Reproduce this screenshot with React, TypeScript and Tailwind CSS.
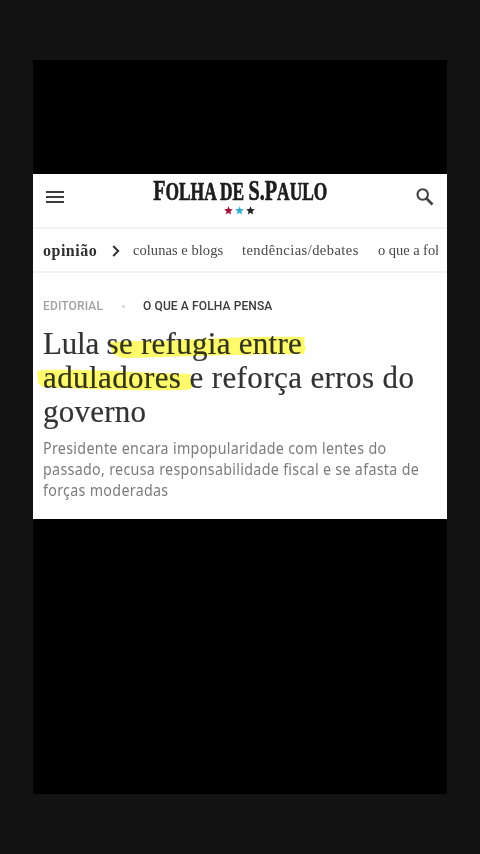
import React from "react";

const navItems = [
  { label: "colunas e blogs", className: "w-[109px] tracking-[0.05px]" },
  { label: "tendências/debates", className: "w-[136px] tracking-[0.45px]" },
  { label: "o que a folha pensa", className: "w-[130px] tracking-[-0.05px]" },
];

const starColors = ["text-[#9e1238]", "text-[#32afd5]", "text-[#222222]"];

function Star({ className }: { className: string }) {
  return (
    <svg viewBox="0 0 20 20" className={`h-[9px] w-[9px] ${className}`}>
      <path
        fill="currentColor"
        d="M10 0.5l2.6 6.2 6.9.7-5.2 4.6 1.6 6.9-5.9-3.7-5.9 3.7 1.6-6.9L.5 7.4l6.9-.7z"
      />
    </svg>
  );
}

function Header() {
  return (
    <header className="flex h-[55px] items-start justify-between border-b-2 border-[#f1f1f1] pr-[13px] pl-3">
      <button aria-label="Menu" className="mt-4 ml-px flex w-[18px] flex-col gap-[3px] pt-px">
        <span className="h-[2px] w-full bg-[#3c3c3e]" />
        <span className="h-[2px] w-full bg-[#3c3c3e]" />
        <span className="h-[2px] w-full bg-[#3c3c3e]" />
      </button>
      <div className="flex flex-col items-center pt-px">
        <div className="flex h-[31px] w-[174px] justify-center">
          <div className="shrink-0 scale-x-[0.695] font-['Liberation_Serif',serif] text-[25px] leading-[30px] font-bold whitespace-nowrap text-[#1c1c1c] [-webkit-text-stroke:0.7px_#1c1c1c]">
            <span className="text-[29px]">F</span>OLHA DE <span className="text-[29px]">S.P</span>AULO
          </div>
        </div>
        <div className="mr-px flex gap-[2px]">
          {starColors.map((color) => (
            <Star key={color} className={color} />
          ))}
        </div>
      </div>
      <svg viewBox="0 0 18 18" className="mt-[14px] h-[18px] w-[18px]" fill="none" stroke="#444446">
        <circle cx="6.7" cy="6.5" r="5.2" strokeWidth="2.1" />
        <path d="M10.5 10.5l6 6" strokeWidth="2.6" />
      </svg>
    </header>
  );
}

function Nav() {
  return (
    <nav className="flex h-[44px] items-center border-b-2 border-[#f1f1f1] pt-px pr-[9px] pl-[10px] font-['Liberation_Serif',serif] text-[#484848]">
      <strong className="w-[69px] shrink-0 text-base tracking-[0.5px] text-[#303030]">opinião</strong>
      <svg viewBox="0 0 8 12" className="mr-[13px] h-3 w-2 shrink-0" fill="none" stroke="#333333" strokeWidth="2">
        <path d="M1.2 1l5 5-5 5" />
      </svg>
      <div className="flex min-w-0 overflow-hidden text-[14.5px] whitespace-nowrap">
        {navItems.map((item) => (
          <a key={item.label} className={`shrink-0 ${item.className}`}>
            {item.label}
          </a>
        ))}
      </div>
    </nav>
  );
}

// Marcador amarelo atras das palavras destacadas
function Highlights() {
  return (
    <svg viewBox="0 0 413 110" className="absolute top-0 left-0 h-[110px] w-[413px]" fill="#fdfb6b">
      <path d="M76 15c20-2 47 0 72-2 40-2 80-4 124-3l-1 8 2 2-2 7c-65 0-125 3-182 4l-9-4z" />
      <path d="M4 44l7-1c48-1 98 3 147 4l-1 5 3 2-2 8-9 1c-49 1-99-1-140-3l-4-4z" />
    </svg>
  );
}

function Article() {
  return (
    <article className="relative">
      <div className="flex h-[54px] items-center px-[10px] pt-3 font-['Roboto',sans-serif] text-xs whitespace-nowrap">
        <span className="w-[79px] font-medium tracking-[0.15px] text-[#a2a2a2]">EDITORIAL</span>
        <span className="mr-[18px] h-[3px] w-[3px] rounded-full bg-[#d5d5d5]" />
        <span className="font-medium tracking-[0.12px] text-[#3c3c3e]">O QUE A FOLHA PENSA</span>
      </div>
      <div className="relative">
        <Highlights />
        <h1 className="relative px-[10px] font-['Liberation_Serif',serif] text-[31px] leading-[34px] whitespace-nowrap text-[#333335] mix-blend-multiply [-webkit-text-stroke:0.2px_#333335]">
          <span className="block tracking-[0.28px]">
            <span className="tracking-[-0.2px]">Lula </span>se refugia entre
          </span>
          <span className="block tracking-[0.4px]">aduladores e reforça erros do</span>
          <span className="block tracking-[0.25px]">governo</span>
        </h1>
      </div>
      <p className="px-[10px] pt-[9px] font-['Noto_Sans',sans-serif] text-[15.5px] leading-[21px] tracking-[0.34px] whitespace-nowrap text-[#7c7c7c]">
        <span className="block origin-left scale-x-[0.92]">Presidente encara impopularidade com lentes do</span>
        <span className="block origin-left scale-x-[0.92]">passado, recusa responsabilidade fiscal e se afasta de</span>
        <span className="block origin-left scale-x-[0.92]">forças moderadas</span>
      </p>
    </article>
  );
}

export default function App() {
  return (
    <div className="flex h-[854px] w-[480px] justify-center bg-[#121212] pt-[60px]">
      <div className="h-[734px] w-[414px] bg-black pt-[114px]">
        <main className="h-[345px] overflow-hidden bg-[#fefefe]">
          <Header />
          <Nav />
          <Article />
        </main>
      </div>
    </div>
  );
}
